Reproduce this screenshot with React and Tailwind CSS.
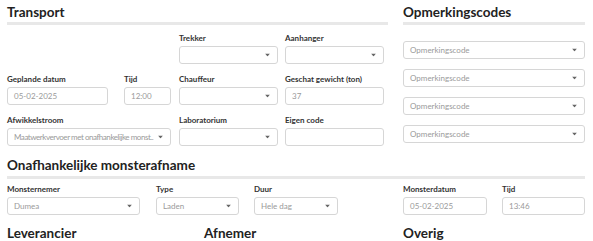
import React from 'react';

const Caret = () => (
    <svg width="5" height="3" viewBox="0 0 5 3" className="absolute right-[7px] top-1/2 -translate-y-1/2">
        <path d="M0 0h5L2.5 3z" fill="#666" />
    </svg>
);

const Box = ({ value, select, className = '' }) => (
    <div className={`relative h-[18px] border border-[#d6d6d6] rounded-[3px] bg-white flex items-center pl-[6px] pr-[14px] text-[8px] text-[#9a9a9a] ${className}`}>
        <span className="whitespace-nowrap">{value}</span>
        {select && <Caret />}
    </div>
);

const Field = ({ label, value, select, className = '', boxClass = '' }) => (
    <div className={`flex flex-col ${className}`}>
        <label className="h-[10px] leading-[10px] mb-[3px] text-[8px] font-bold text-[#333] whitespace-nowrap">{label}</label>
        <Box value={value} select={select} className={boxClass} />
    </div>
);

const Heading = ({ children, className = '' }) => (
    <h2 className={`h-[18px] leading-[18px] text-[13.5px] font-bold text-[#222] whitespace-nowrap ${className}`}>{children}</h2>
);

const Rule = ({ className = '' }) => <div className={`h-[3px] bg-[#e8e8e8] ${className}`} />;

export default function App() {
    return (
        <div className="w-[593px] h-[241px] overflow-hidden bg-white font-['Lato',sans-serif] text-[#333] px-[7px]">
            <div className="flex">
                {/* Transport */}
                <div className="w-[381px]">
                    <Heading className="mt-[3px]">Transport</Heading>
                    <Rule className="mt-[1px]" />
                    <div className="flex mt-[8px] pl-[172px] gap-[7px]">
                        <Field label="Trekker" select className="w-[99px]" />
                        <Field label="Aanhanger" select className="w-[99px]" />
                    </div>
                    <div className="flex mt-[10px]">
                        <Field label="Geplande datum" value="05-02-2025" className="w-[101px]" />
                        <Field label="Tijd" value="12:00" className="w-[47px] ml-[16px]" />
                        <Field label="Chauffeur" select className="w-[99px] ml-[8px]" />
                        <Field label="Geschat gewicht (ton)" value="37" className="w-[99px] ml-[7px]" />
                    </div>
                    <div className="flex mt-[10px]">
                        <Field label="Afwikkelstroom" value="Maatwerkvervoer met onafhankelijke monst.." select className="w-[164px]" boxClass="text-[7px] tracking-[-0.45px]" />
                        <Field label="Laboratorium" select className="w-[99px] ml-[8px]" />
                        <Field label="Eigen code" className="w-[99px] ml-[7px]" />
                    </div>
                </div>

                {/* Opmerkingscodes */}
                <div className="w-[182px] ml-[15px]">
                    <Heading className="mt-[3px]">Opmerkingscodes</Heading>
                    <Rule className="mt-[1px]" />
                    <div className="flex flex-col gap-[10px] mt-[16px]">
                        <Box value="Opmerkingscode" select />
                        <Box value="Opmerkingscode" select />
                        <Box value="Opmerkingscode" select />
                        <Box value="Opmerkingscode" select />
                    </div>
                </div>
            </div>

            {/* Onafhankelijke monsterafname */}
            <Heading className="mt-[10px]">Onafhankelijke monsterafname</Heading>
            <Rule className="mt-[2px] w-[578px]" />
            <div className="flex mt-[5px]">
                <Field label="Monsternemer" value="Dumea" select className="w-[133px]" />
                <Field label="Type" value="Laden" select className="w-[83px] ml-[16px]" />
                <Field label="Duur" value="Hele dag" select className="w-[84px] ml-[15px]" />
                <Field label="Monsterdatum" value="05-02-2025" className="w-[84px] ml-[65px]" />
                <Field label="Tijd" value="13:46" className="w-[83px] ml-[15px]" />
            </div>

            <div className="flex mt-[9px]">
                <Heading className="w-[197px]">Leverancier</Heading>
                <Heading className="w-[199px]">Afnemer</Heading>
                <Heading>Overig</Heading>
            </div>
        </div>
    );
}
